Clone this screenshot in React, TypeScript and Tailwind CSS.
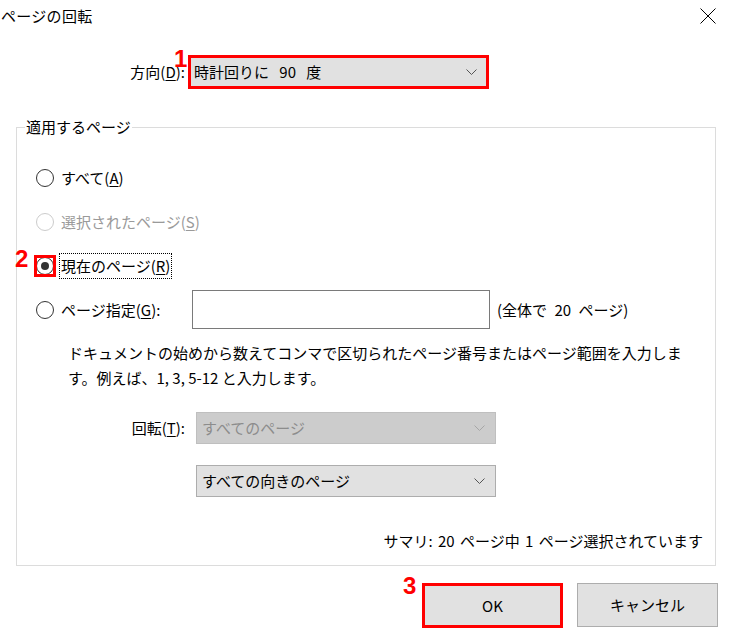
import { ReactNode } from "react"

const font = { fontFamily: '"Noto Sans CJK JP", "Noto Sans", sans-serif' }

const Chevron = ({ color = "#555" }: { color?: string }) => (
  <svg width="11" height="6" viewBox="0 0 11 6" className="shrink-0">
    <polyline points="0.5,0.5 5.5,5.5 10.5,0.5" fill="none" stroke={color} strokeWidth="1" />
  </svg>
)

const Marker = ({ n, className }: { n: string; className: string }) => (
  <span
    className={`absolute text-[24px] leading-none font-bold text-[#ff0000] ${className}`}
    style={{ fontFamily: '"Liberation Sans", Arial, sans-serif' }}
  >
    {n}
  </span>
)

const Key = ({ k }: { k: string }) => <span className="underline underline-offset-2">{k}</span>

const Radio = ({ checked, disabled, highlight }: { checked?: boolean; disabled?: boolean; highlight?: boolean }) => (
  <span className="relative flex h-[18px] w-[18px] shrink-0 items-center justify-center">
    <span
      className={`flex h-[18px] w-[18px] items-center justify-center rounded-full border bg-white ${
        disabled ? "border-[#cccccc]" : "border-[#333333]"
      }`}
    >
      {checked && <span className="h-[8px] w-[8px] rounded-full bg-[#333333]" />}
    </span>
    {highlight && <span className="absolute -inset-[2px] border-[3px] border-[#ff0000]" />}
  </span>
)

const RadioRow = ({ children, h = "h-[44px]" }: { children: ReactNode; h?: string }) => (
  <div className={`flex items-center gap-[7px] ${h}`}>{children}</div>
)

export default function App() {
  return (
    <div className="relative h-[633px] w-[730px] overflow-hidden bg-white text-[15px] text-black" style={font}>
      {/* Title bar */}
      <div className="flex h-[32px] items-center justify-between pl-[1px] pr-[14px]">
        <span className="leading-[20px] [letter-spacing:0.3px]">ページの回転</span>
        <svg width="16" height="16" viewBox="0 0 16 16">
          <path d="M0.5 0.5 L15.5 15.5 M15.5 0.5 L0.5 15.5" stroke="#000" strokeWidth="1" />
        </svg>
      </div>

      {/* Direction */}
      <div className="mt-[23px] flex items-center">
        <span className="w-[188px] pr-[3px] text-right leading-[20px]">
          方向(<Key k="D" />):
        </span>
        <div className="relative flex h-[34px] w-[301px] items-center justify-between border-[3px] border-[#ff0000] bg-[#e1e1e1] pl-[3px] pr-[9px]">
          <span className="leading-[20px] [word-spacing:7px]">時計回りに 90 度</span>
          <Chevron />
          <Marker n="1" className="-left-[17px] -top-[11px]" />
        </div>
      </div>

      {/* Pages group */}
      <fieldset className="ml-[16px] mt-[28px] w-[700px] border border-[#dcdcdc] px-0 pb-[14px]">
        <legend className="ml-[8px] px-[1px] text-[15px] leading-[20px]">適用するページ</legend>
        <div className="pl-[19px] pr-[12px] pt-[19px]">
          <RadioRow>
            <Radio />
            <span className="leading-[20px]">
              すべて(<Key k="A" />)
            </span>
          </RadioRow>
          <RadioRow>
            <Radio disabled />
            <span className="leading-[20px] text-[#9a9a9a]">
              選択されたページ(<Key k="S" />)
            </span>
          </RadioRow>
          <RadioRow>
            <span className="relative flex">
              <Radio checked highlight />
              <Marker n="2" className="-left-[21px] -top-[10px]" />
            </span>
            <span className="-ml-[2px] border border-dotted border-black px-[1px] leading-[24px]">
              現在のページ(<Key k="R" />)
            </span>
          </RadioRow>
          <RadioRow h="h-[43px]">
            <Radio />
            <span className="w-[131px] leading-[20px]">
              ページ指定(<Key k="G" />):
            </span>
            <div className="-ml-[7px] h-[39px] w-[298px] border border-[#7a7a7a] bg-white" />
            <span className="leading-[20px] [word-spacing:4px]">(全体で 20 ページ)</span>
          </RadioRow>

          <p className="mt-[9px] pl-[32px] leading-[25px]">
            ドキュメントの始めから数えてコンマで区切られたページ番号またはページ範囲を入力しま
            <br />
            す。例えば、1, 3, 5-12 と入力します。
          </p>

          <div className="mt-[22px] flex items-center">
            <span className="w-[160px] pr-[11px] text-right leading-[20px]">
              回転(<Key k="T" />):
            </span>
            <div className="flex h-[32px] w-[300px] items-center justify-between border border-[#bfbfbf] bg-[#cccccc] pl-[5px] pr-[10px]">
              <span className="leading-[20px] text-[#8c8c8c]">すべてのページ</span>
              <Chevron color="#a6a6a6" />
            </div>
          </div>

          <div className="mt-[21px] flex items-center pl-[160px]">
            <div className="flex h-[32px] w-[300px] items-center justify-between border border-[#adadad] bg-[#e1e1e1] pl-[5px] pr-[10px]">
              <span className="leading-[20px]">すべての向きのページ</span>
              <Chevron />
            </div>
          </div>

          <p className="mt-[34px] text-right leading-[20px] [word-spacing:2px]">
            サマリ: 20 ページ中 1 ページ選択されています
          </p>
        </div>
      </fieldset>

      {/* Buttons */}
      <div className="mt-[17px] flex justify-end gap-[14px] pr-[12px]">
        <button className="relative h-[45px] w-[141px] border-[3px] border-[#ff0000] bg-[#e1e1e1] font-normal leading-[20px]">
          OK
          <Marker n="3" className="-left-[22px] -top-[12px]" />
        </button>
        <button className="h-[44px] w-[141px] border border-[#adadad] bg-[#e1e1e1] font-normal leading-[20px]">
          キャンセル
        </button>
      </div>
    </div>
  )
}
